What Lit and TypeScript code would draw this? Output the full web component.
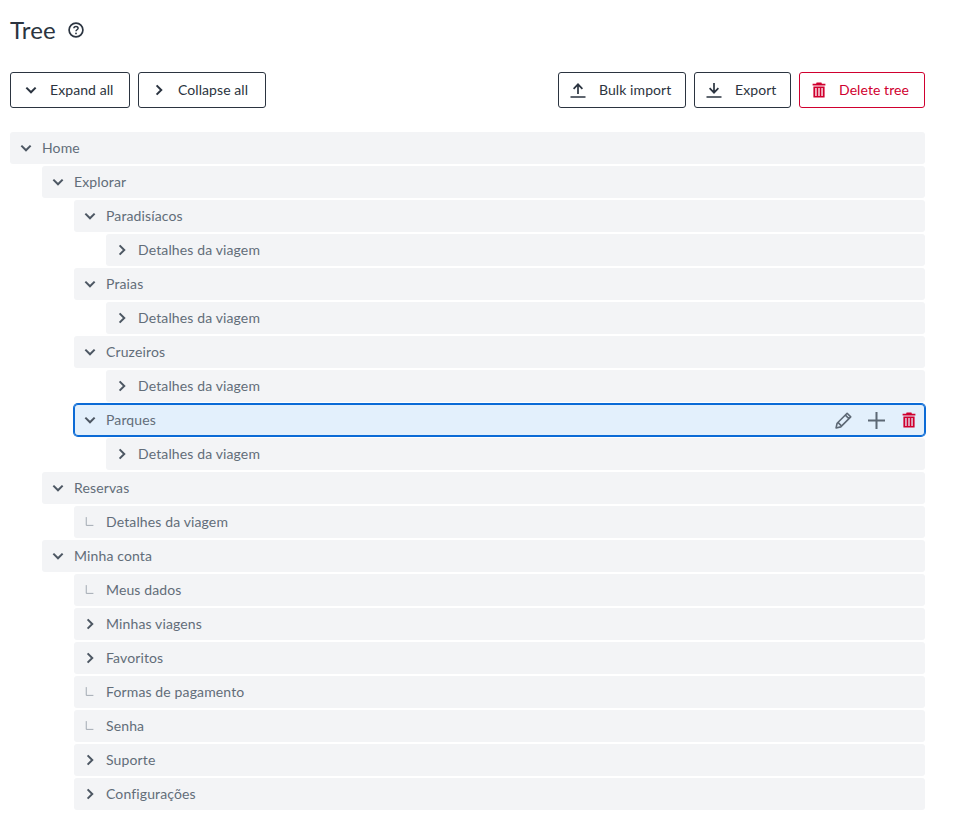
import { LitElement, html, css, svg } from "lit";
import { customElement } from "lit/decorators.js";

interface Node { label: string; state: "open" | "closed" | "leaf"; selected?: boolean; children?: Node[]; }

const det = (): Node => ({ label: "Detalhes da viagem", state: "closed" });
const tree: Node = {
  label: "Home", state: "open", children: [
    { label: "Explorar", state: "open", children: [
      { label: "Paradisíacos", state: "open", children: [det()] },
      { label: "Praias", state: "open", children: [det()] },
      { label: "Cruzeiros", state: "open", children: [det()] },
      { label: "Parques", state: "open", selected: true, children: [det()] },
    ] },
    { label: "Reservas", state: "open", children: [{ label: "Detalhes da viagem", state: "leaf" }] },
    { label: "Minha conta", state: "open", children: [
      { label: "Meus dados", state: "leaf" },
      { label: "Minhas viagens", state: "closed" },
      { label: "Favoritos", state: "closed" },
      { label: "Formas de pagamento", state: "leaf" },
      { label: "Senha", state: "leaf" },
      { label: "Suporte", state: "closed" },
      { label: "Configurações", state: "closed" },
    ] },
  ],
};

const icon = (size: number, body: unknown, cls = "") =>
  html`<svg class=${cls} width=${size} height=${size} viewBox="0 0 16 16" fill="none">${body}</svg>`;

const chevDown = svg`<path d="M1.8 4.8 8 11l6.2-6.2" stroke="currentColor" stroke-width="2.7" fill="none"/>`;
const chevRight = svg`<path d="M4.8 1.8 11 8l-6.2 6.2" stroke="currentColor" stroke-width="2.7" fill="none"/>`;
const upload = svg`<path d="M8 12V2.5M3.6 6.8 8 2.3l4.4 4.5M0.5 15h15" stroke="currentColor" stroke-width="1.7" fill="none"/>`;
const download = svg`<path d="M8 1v9.6M3.6 6.2 8 10.7l4.4-4.5M0.5 15h15" stroke="currentColor" stroke-width="1.7" fill="none"/>`;
const trash = svg`<path fill="currentColor" fill-rule="evenodd" d="M5.6 0.4h4.8l.5 1.4h3.5v1.6H1.6V1.8h3.5zM2.4 4.4h11.2v11.2H2.4zM4.3 6v8h1.3V6zM7.35 6v8h1.3V6zM10.4 6v8h1.3V6z"/>`;
const pencil = svg`<path d="M11.4 1.2 14.8 4.6 5.4 14 1 15 2 10.6zM9.8 3l3.2 3.2M3.2 10.2l2.6 2.6" stroke="currentColor" stroke-width="1.5" fill="none" stroke-linejoin="round"/>`;
const plus = svg`<path d="M8 0v16M0 8h16" stroke="currentColor" stroke-width="1.9" fill="none"/>`;
const leaf = svg`<path d="M3 1.5v11h9.5" stroke="currentColor" stroke-width="1.2" fill="none"/>`;
const help = svg`<circle cx="8" cy="8" r="6.9" stroke="currentColor" stroke-width="1.7" fill="none"/><path d="M5.9 6.3c0-1.2 1-1.9 2.1-1.9s2.1.7 2.1 1.8c0 1.5-2.1 1.6-2.1 3" stroke="currentColor" stroke-width="1.5" fill="none"/><circle cx="8" cy="11.4" r=".9" fill="currentColor"/>`;

@customElement("app-root")
export class AppRoot extends LitElement {
  static styles = css`
    :host { display: block; width: 955px; height: 840px; box-sizing: border-box; padding: 0 30px 0 10px; background: #fff; font-family: "Lato", "Liberation Sans", sans-serif; color: #2b3440; }
    .title { display: flex; align-items: center; gap: 12px; height: 60px; }
    h1 { margin: 0 0 2px; font-size: 24px; font-weight: 400; letter-spacing: .2px; color: #2b3440; }
    .help { color: #2b3440; }
    .toolbar { display: flex; gap: 8px; margin-top: 12px; margin-bottom: 24px; }
    .spacer { flex: 1; }
    button { box-sizing: border-box; height: 36px; display: flex; align-items: center; background: #fff; border: 1px solid #2b3440; border-radius: 3px; padding: 0; font: 400 14px "Lato", "Liberation Sans", sans-serif; letter-spacing: .08px; color: #2b3440; }
    button span { padding-bottom: 1px; }
    button.danger { border-color: #d0002f; color: #d0002f; }
    .b1 { width: 120px; } .b2 { width: 128px; } .b3 { width: 128px; } .b4 { width: 97px; } .b5 { width: 126px; }
    .b1 svg, .b2 svg { margin-left: 14px; }
    .b1 span, .b2 span { margin-left: 13px; }
    .b3 svg, .b4 svg { margin-left: 11px; }
    .b3 span, .b4 span { margin-left: 13px; }
    .b5 svg { margin-left: 11px; }
    .b5 span { margin-left: 12px; }
    .group { display: flex; flex-direction: column; gap: 2px; }
    .kids { display: flex; flex-direction: column; gap: 2px; padding-left: 32px; }
    .row { box-sizing: border-box; height: 32px; display: flex; align-items: center; background: #f3f4f6; border-radius: 3px; color: #626d79; font-size: 14px; letter-spacing: .13px; padding-left: 10px; gap: 10px; }
    .row.sel { background: #e3f0fc; border-radius: 4px; box-shadow: 0 0 0 1px #0b6bd6, inset 0 0 0 1px #0b6bd6; }
    .tw { width: 12px; height: 12px; flex: none; color: #4d5763; }
    .lf { color: #9aa2ac; }
    .label { flex: 1; padding-bottom: 2px; }
    .actions { display: flex; align-items: center; gap: 16px; margin-right: 8px; color: #5d6874; }
    .del { color: #d0002f; }
  `;

  private renderNode(n: Node): unknown {
    const glyph = n.state === "open" ? chevDown : n.state === "closed" ? chevRight : leaf;
    return html`<div class="group">
      <div class="row ${n.selected ? "sel" : ""}">
        ${icon(12, glyph, n.state === "leaf" ? "tw lf" : "tw")}
        <span class="label">${n.label}</span>
        ${n.selected ? html`<span class="actions">${icon(17, pencil)}${icon(17, plus)}${icon(16, trash, "del")}</span>` : ""}
      </div>
      ${n.children ? html`<div class="kids">${n.children.map((c) => this.renderNode(c))}</div>` : ""}
    </div>`;
  }

  render() {
    return html`
      <div class="title"><h1>Tree</h1>${icon(16, help, "help")}</div>
      <div class="toolbar">
        <button class="b1">${icon(12, chevDown)}<span>Expand all</span></button>
        <button class="b2">${icon(12, chevRight)}<span>Collapse all</span></button>
        <div class="spacer"></div>
        <button class="b3">${icon(16, upload)}<span>Bulk import</span></button>
        <button class="b4">${icon(16, download)}<span>Export</span></button>
        <button class="b5 danger">${icon(16, trash)}<span>Delete tree</span></button>
      </div>
      ${this.renderNode(tree)}
    `;
  }
}
